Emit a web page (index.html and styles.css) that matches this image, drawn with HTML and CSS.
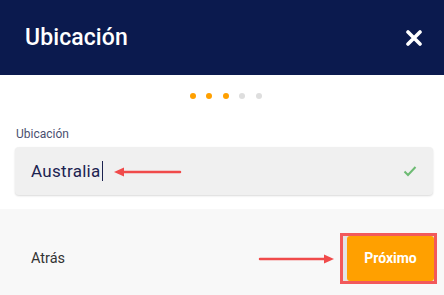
FILE: index.html
```html
<!DOCTYPE html>
<html lang="es">
<head>
<meta charset="utf-8">
<link rel="stylesheet" href="styles.css">
</head>
<body>
<div class="modal">
  <header class="header">
    <h1 class="title">Ubicación</h1>
    <svg class="close" width="16" height="16" viewBox="0 0 16 16"><path d="M2 2L14 14M14 2L2 14" stroke="#fff" stroke-width="3.6" stroke-linecap="round"/></svg>
  </header>
  <main class="body">
    <div class="dots">
      <span class="dot on"></span><span class="dot on"></span><span class="dot on"></span><span class="dot"></span><span class="dot"></span>
    </div>
    <label class="label">Ubicación</label>
    <div class="input">
      <span class="value">Australia</span><span class="caret"></span>
      <svg class="check" width="14" height="12" viewBox="0 0 14 12"><path d="M1.5 6.5L5 10L12.5 2" fill="none" stroke="#6dbb73" stroke-width="2"/></svg>
    </div>
  </main>
  <footer class="footer">
    <span class="back">Atrás</span>
    <div class="btn-wrap"><button class="next">Próximo</button></div>
  </footer>
  <svg class="arrow arrow-left" width="70" height="10" viewBox="0 0 70 10"><path d="M8 5H66" stroke="#f04a4a" stroke-width="2.5" stroke-linecap="round"/><path d="M0 5L10 0.5V9.5Z" fill="#f04a4a"/></svg>
  <svg class="arrow arrow-right" width="76" height="10" viewBox="0 0 76 10"><path d="M2 5H66" stroke="#f04a4a" stroke-width="2.5" stroke-linecap="round"/><path d="M76 5L66 0.5V9.5Z" fill="#f04a4a"/></svg>
</div>
</body>
</html>
```

FILE: styles.css
```css
* { box-sizing: border-box; }
html, body { margin: 0; padding: 0; }
body { width: 444px; height: 295px; overflow: hidden; background: #fff; font-family: Roboto, "Noto Sans", sans-serif; }
.modal { position: relative; width: 444px; height: 295px; display: flex; flex-direction: column; }
.header { height: 75px; background: #0b1a4e; display: flex; align-items: center; justify-content: space-between; padding: 0 22px 0 25px; }
.title { margin: 0; color: #fff; font-size: 23px; font-weight: 500; letter-spacing: 0.1px; }
.close { display: block; margin-top: 1px; }
.body { padding: 0 11px 0 15px; height: 134px; }
.dots { display: flex; justify-content: center; gap: 10.5px; padding-top: 18px; height: 37px; padding-left: 3px; }
.dot { width: 6px; height: 6px; border-radius: 50%; background: #dedede; }
.dot.on { background: #ffa000; }
.label { display: block; font-size: 12px; color: #4a5070; padding-left: 1px; height: 17px; line-height: 16px; margin-top: 14px; }
.input { margin-top: 4px; height: 48px; background: #f0f0f0; border-radius: 4px; box-shadow: 0 1px 2px rgba(0,0,0,0.15); display: flex; align-items: center; padding: 0 16px; }
.value { font-size: 17px; color: #1c2350; letter-spacing: 0.3px; }
.caret { width: 1px; height: 20px; background: #1c2350; margin-left: 1px; }
.check { margin-left: auto; }
.footer { flex: 1; background: #f8f8f8; display: flex; align-items: center; justify-content: space-between; padding: 12px 7px 0 31px; }
.back { font-size: 14.5px; color: #333; }
.btn-wrap { border: 3px solid #f2595b; padding: 0 0 0 4px; height: 51px; display: flex; align-items: center; background: #e4e4e4; }
.next { border: 0; background: #ffa000; color: #fff; font-family: Roboto, "Noto Sans", sans-serif; font-weight: 700; font-size: 14px; width: 87px; height: 45px; border-radius: 3px; padding: 0; }
.arrow { position: absolute; }
.arrow-left { left: 114px; top: 167px; }
.arrow-right { left: 258px; top: 254px; }
```
